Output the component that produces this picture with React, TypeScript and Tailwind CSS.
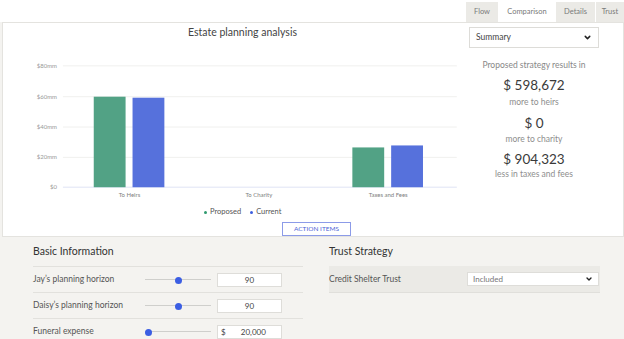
import React from 'react';
import { ChevronDown } from 'lucide-react';

const tabs = [
  { name: 'Flow', w: 'w-[32px]' },
  { name: 'Comparison', w: 'w-[56px]' },
  { name: 'Details', w: 'w-[39px]' },
  { name: 'Trust', w: 'w-[28px]' },
];

const grid = [
  { y: 66, label: '$80mm' },
  { y: 97, label: '$60mm' },
  { y: 127.5, label: '$40mm' },
  { y: 158, label: '$20mm' },
  { y: 188, label: '$0' },
];

const GREEN = '#52a285';
const BLUE = '#5671dc';

function Chart() {
  return (
    <svg width={460} height={161} viewBox="3 41 460 161" style={{ fontFamily: 'Lato, sans-serif' }}>
      {grid.map((g) => (
        <g key={g.label}>
          <line x1={62} x2={458} y1={g.y} y2={g.y} stroke={g.label === '$0' ? '#dfe3f4' : '#f0f0ee'} strokeWidth={1} />
          <text x={56} y={g.y + 2} fontSize={6} fill="#999" textAnchor="end">
            {g.label}
          </text>
        </g>
      ))}
      <rect x={93} y={97} width={32} height={91} fill={GREEN} />
      <rect x={132} y={98} width={32} height={90} fill={BLUE} />
      <rect x={353} y={148} width={32} height={40} fill={GREEN} />
      <rect x={392} y={146} width={32} height={42} fill={BLUE} />
      <text x={129} y={198} fontSize={6} fill="#808080" textAnchor="middle">To Heirs</text>
      <text x={259} y={198} fontSize={6} fill="#808080" textAnchor="middle">To Charity</text>
      <text x={389} y={198} fontSize={6} fill="#808080" textAnchor="middle">Taxes and Fees</text>
    </svg>
  );
}

function Slider({ pos }: { pos: number }) {
  return (
    <div className="relative w-[66px] h-[8px] flex items-center">
      <div className="w-full h-px bg-[#cfcfcc]" />
      <div
        className="absolute top-[1px] w-[7px] h-[7px] rounded-full bg-[#3b5ee3]"
        style={{ left: pos - 3 }}
      />
    </div>
  );
}

const rows = [
  { label: 'Jay’s planning horizon', pos: 33, value: '90' },
  { label: 'Daisy’s planning horizon', pos: 33, value: '90' },
  { label: 'Funeral expense', pos: 3, value: '20,000', dollar: true },
];

export default function App() {
  return (
    <div className="w-[624px] h-[339px] overflow-hidden bg-[#f4f3f0] font-['Lato',sans-serif] text-[#333]">
      {/* Tabs */}
      <div className="h-[22px] bg-white flex justify-end items-end gap-[1px]">
        {tabs.map((t) => (
          <div
            key={t.name}
            className={`${t.w} h-[20px] flex items-center justify-center text-[7.5px] text-[#7a7a7a] ${
              t.name === 'Comparison' ? 'bg-white' : 'bg-[#ebeae6]'
            }`}
          >
            {t.name}
          </div>
        ))}
      </div>

      {/* Chart card */}
      <div className="ml-[2px] h-[215px] bg-white border border-[#e4e3df] flex">
        <div className="w-[460px] flex flex-col">
          <div className="h-[18px] leading-[18px] pl-[185px] text-[10.5px] text-[#444]">Estate planning analysis</div>
          <Chart />
          <div className="mt-[4px] h-[14px] ml-[201px] flex items-center gap-[9px] text-[7.5px] text-[#555]">
            <span className="flex items-center gap-[3px]">
              <span className="w-[3px] h-[3px] rounded-full bg-[#2e9a6e]" />
              Proposed
            </span>
            <span className="flex items-center gap-[3px]">
              <span className="w-[3px] h-[3px] rounded-full bg-[#3c5ee0]" />
              Current
            </span>
          </div>
          <div className="mt-[3px] ml-[279px] w-[69px] h-[14px] border border-[#8c9be8] bg-white flex items-center justify-center text-[6.5px] text-[#4b63d6]">
            ACTION ITEMS
          </div>
        </div>

        <div className="ml-[6px] w-[130px] flex flex-col items-center">
          <div className="mt-[4px] w-[130px] h-[21px] border border-[#dddcd8] flex items-center justify-between px-[6px] text-[8.5px] text-[#444]">
            Summary
            <ChevronDown className="w-[9px] h-[9px] text-[#222]" strokeWidth={4} />
          </div>
          <div className="mt-[11px] leading-[12px] text-[8.5px] text-[#888]">Proposed strategy results in</div>
          <div className="mt-[5px] leading-[18px] text-[13.5px] text-[#3a3a3a]">$ 598,672</div>
          <div className="mt-[2px] leading-[12px] text-[8.5px] text-[#8e8e8e]">more to heirs</div>
          <div className="mt-[6px] leading-[18px] text-[13.5px] text-[#3a3a3a]">$ 0</div>
          <div className="mt-[1px] leading-[12px] text-[8.5px] text-[#8e8e8e]">more to charity</div>
          <div className="mt-[5px] leading-[18px] text-[13.5px] text-[#3a3a3a]">$ 904,323</div>
          <div className="leading-[12px] text-[8.5px] text-[#8e8e8e]">less in taxes and fees</div>
        </div>
      </div>

      {/* Inputs */}
      <div className="flex pl-[33px] gap-[26px]">
        <div className="w-[270px]">
          <div className="pt-[6px] h-[29px] leading-[16px] text-[10.5px] text-[#333]">Basic Information</div>
          {rows.map((r) => (
            <div key={r.label} className="h-[26px] border-t border-[#e2e1dd] flex items-center">
              <div className="w-[112px] text-[8.5px] text-[#555]">{r.label}</div>
              <Slider pos={r.pos} />
              <div className="ml-[6px] w-[65px] h-[14px] bg-white border border-[#deddd9] flex items-center text-[8px] text-[#444]">
                {r.dollar && <span className="pl-[3px]">$</span>}
                <span className="flex-1 text-center">{r.value}</span>
              </div>
            </div>
          ))}
        </div>

        <div className="w-[271px]">
          <div className="pt-[6px] h-[29px] leading-[16px] text-[10.5px] text-[#333]">Trust Strategy</div>
          <div className="h-[27px] bg-[#ebeae6] border-b border-[#e0dfdb] flex items-center">
            <div className="w-[138px] text-[8.5px] text-[#555]">Credit Shelter Trust</div>
            <div className="w-[132px] h-[14px] bg-white border border-[#deddd9] flex items-center justify-between px-[5px] text-[8px] text-[#777]">
              Included
              <ChevronDown className="w-[8px] h-[8px] text-[#222]" strokeWidth={4} />
            </div>
          </div>
        </div>
      </div>
    </div>
  );
}
